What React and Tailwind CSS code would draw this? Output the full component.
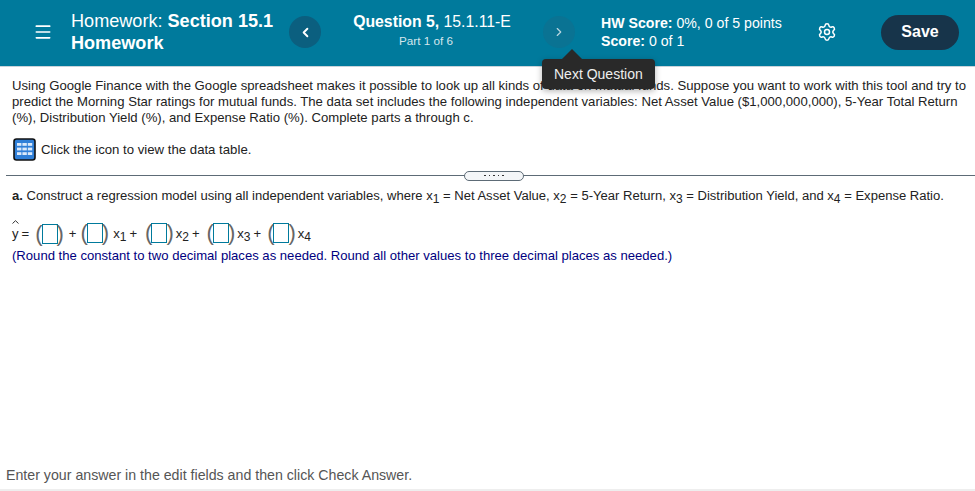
import { ChevronLeft, ChevronRight, Settings, Menu } from "lucide-react";

function AnswerBox() {
  return (
    <span className="inline-flex items-center">
      <span className="text-[22px] leading-none text-[#666]">(</span>
      <span className="-mx-[1px] h-5 w-4 border border-[#007a9c] bg-white"></span>
      <span className="text-[22px] leading-none text-[#666]">)</span>
    </span>
  );
}

function Sub({ n }) {
  return (
    <span>
      x<span className="align-[-3px] text-[12px] leading-none">{n}</span>
    </span>
  );
}

function TableIcon() {
  return (
    <svg width="23" height="23" viewBox="0 0 23 23" className="shrink-0">
      <rect x="1" y="1" width="21" height="21" rx="2.5" fill="#2f7fd8" stroke="#111" strokeWidth="1.6" />
      <g fill="#dbe9fa">
        <rect x="4" y="5" width="4.4" height="2.8" />
        <rect x="9.4" y="5" width="4.4" height="2.8" />
        <rect x="14.8" y="5" width="4.4" height="2.8" />
        <rect x="4" y="9.6" width="4.4" height="2.8" />
        <rect x="9.4" y="9.6" width="4.4" height="2.8" />
        <rect x="14.8" y="9.6" width="4.4" height="2.8" />
        <rect x="4" y="14.2" width="4.4" height="2.8" />
        <rect x="9.4" y="14.2" width="4.4" height="2.8" />
        <rect x="14.8" y="14.2" width="4.4" height="2.8" />
      </g>
    </svg>
  );
}

export default function App() {
  return (
    <div className="flex h-[491px] w-[975px] flex-col overflow-hidden bg-white font-['Liberation_Sans',sans-serif] text-[#222]">
      {/* top bar */}
      <header className="flex h-[67px] shrink-0 items-center border-b border-[#c9d3da] bg-[#007a9c] pb-[2px] text-white">
        <Menu size={20} strokeWidth={2} className="ml-[33px] shrink-0" />
        <div className="ml-[18px] w-[212px] shrink-0 text-[18.1px] leading-[22px]">
          <div>
            Homework: <span className="font-bold">Section 15.1</span>
          </div>
          <div className="font-bold">Homework</div>
        </div>
        <button className="ml-[6px] flex h-8 w-8 shrink-0 items-center justify-center rounded-full bg-[#0b5f7f]">
          <ChevronLeft size={15} strokeWidth={3} />
        </button>
        <div className="w-[222px] shrink-0 pb-[3px] text-center">
          <div className="text-[15.8px] leading-[19px]">
            <span className="font-bold">Question 5,</span> 15.1.11-E
          </div>
          <div className="mt-[2px] pr-3 text-[11.7px] leading-[16px] text-[#d5e6ec]">Part 1 of 6</div>
        </div>
        <div className="relative shrink-0">
          <button className="flex h-8 w-8 items-center justify-center rounded-full bg-[#0a7393]">
            <ChevronRight size={14} strokeWidth={2} className="text-[#b9d6e0]" />
          </button>
          {/* tooltip */}
          <div className="absolute top-[43px] left-[-1px] z-10 h-[30px] rounded-[4px] bg-[#292929] px-3 py-[7px] text-[14px] leading-[16px] whitespace-nowrap text-[#eee] shadow-[0_2px_6px_rgba(0,0,0,0.3)]">
            Next Question
            <span className="absolute top-[-10px] left-[20px] h-0 w-0 border-x-[10px] border-b-[10px] border-x-transparent border-b-[#292929]"></span>
          </div>
        </div>
        <div className="ml-[26px] w-[216px] shrink-0 text-[14.15px] leading-[18px]">
          <div>
            <span className="font-bold">HW Score:</span> 0%, 0 of 5 points
          </div>
          <div>
            <span className="font-bold">Score:</span> 0 of 1
          </div>
        </div>
        <Settings size={20} strokeWidth={1.8} className="shrink-0" />
        <button className="ml-[44px] h-[35px] w-[78px] shrink-0 rounded-[18px] bg-[#17344a] text-[16px] font-bold">
          Save
        </button>
      </header>

      {/* question body */}
      <main className="flex min-h-0 flex-1 flex-col text-[13.1px]">
        <p className="mx-2 mt-[11px] pl-1 text-[13.15px] leading-4">
          Using Google Finance with the Google spreadsheet makes it possible to look up all kinds of data on mutual funds. Suppose you want to work with this tool and try to predict the Morning Star ratings for mutual funds. The data set includes the following independent variables: Net Asset Value ($1,000,000,000), 5-Year Total Return (%), Distribution Yield (%), and Expense Ratio (%). Complete parts a through c.
        </p>
        <div className="mt-3 ml-[13px] flex items-center gap-[5px] text-[13.2px]">
          <TableIcon />
          <span>Click the icon to view the data table.</span>
        </div>

        {/* divider with grip */}
        <div className="relative mt-[9px] ml-[6px] flex h-[11px] items-center">
          <div className="h-px w-full bg-[#5d6b76]"></div>
          <div className="absolute left-[458px] flex h-[10px] w-[60px] items-center justify-center gap-[3px] rounded-[5px] border border-[#5d6b76] bg-[#f4f6f8]">
            <span className="size-[1.5px] bg-[#333]"></span>
            <span className="size-[1.5px] bg-[#333]"></span>
            <span className="size-[1.5px] bg-[#333]"></span>
            <span className="size-[1.5px] bg-[#333]"></span>
            <span className="size-[1.5px] bg-[#333]"></span>
          </div>
        </div>

        <p className="mt-[7px] ml-3 text-[13.06px] leading-4">
          <b>a.</b> Construct a regression model using all independent variables, where <Sub n="1" /> = Net Asset Value, <Sub n="2" /> = 5-Year Return, <Sub n="3" /> = Distribution Yield, and <Sub n="4" /> = Expense Ratio.
        </p>

        <div className="mt-[18px] ml-3 flex h-[22px] items-center gap-[3px]">
          <span className="relative">
            y
            <svg width="7" height="4" viewBox="0 0 7 4" className="absolute top-[-4px] left-0">
              <path d="M0.5 3.5 L3.5 0.7 L6.5 3.5" fill="none" stroke="#333" strokeWidth="1" />
            </svg>
          </span>
          <span className="mr-[3px]">=</span>
          <AnswerBox />
          <span className="ml-[2px]">+</span>
          <span className="ml-[1px]"><AnswerBox /></span>
          <span className="ml-[1px]"><Sub n="1" /></span>
          <span>+</span>
          <span className="ml-[5px]"><AnswerBox /></span>
          <span className="-ml-[1px]"><Sub n="2" /></span>
          <span>+</span>
          <span className="ml-[4px]"><AnswerBox /></span>
          <span className="-ml-[1px]"><Sub n="3" /></span>
          <span>+</span>
          <span className="ml-[3px]"><AnswerBox /></span>
          <span className="-ml-[1px]"><Sub n="4" /></span>
        </div>
        <p className="mt-[3px] ml-3 leading-4 text-[#000080]">
          (Round the constant to two decimal places as needed. Round all other values to three decimal places as needed.)
        </p>

        {/* footer hint */}
        <div className="mt-auto border-b-2 border-[#eeeeee] pb-[6px] pl-[6px] text-[14.2px] leading-4 text-[#555]">
          Enter your answer in the edit fields and then click Check Answer.
        </div>
      </main>
    </div>
  );
}
